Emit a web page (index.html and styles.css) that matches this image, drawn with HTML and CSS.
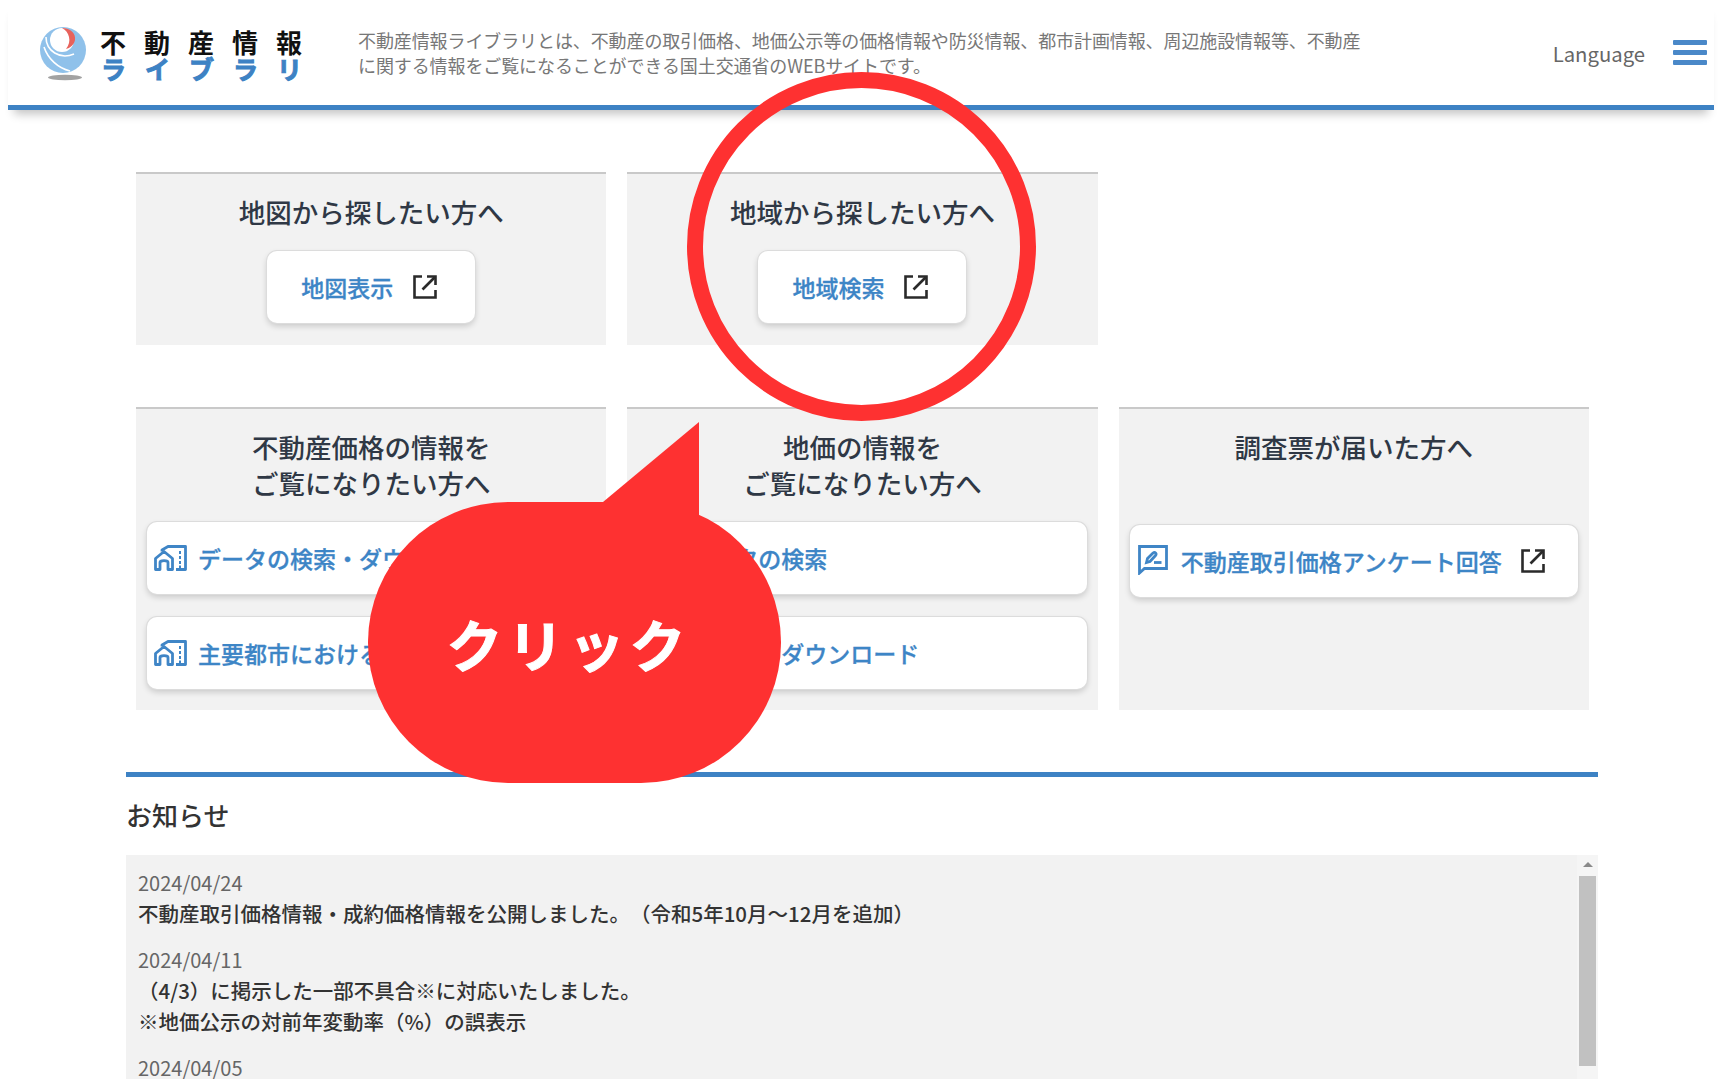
FILE: index.html
```html
<!DOCTYPE html>
<html lang="ja">
<head>
<meta charset="utf-8">
<title>不動産情報ライブラリ</title>
<link rel="stylesheet" href="styles.css">
</head>
<body>
<header class="site-header">
  <a class="logo">
    <svg class="logo-mark" viewBox="0 0 50 54" width="50" height="54" aria-hidden="true">
      <circle cx="23" cy="23" r="23" fill="#8fc1ea"/>
      <circle cx="22" cy="13" r="12" fill="#fff"/>
      <path d="M22 1C31 1 36 7 35 13C34 18 30 21 26 22C29 18 30 14 29 10C28 6 26 3 22 1Z" fill="#e8625c"/>
      <path d="M6 10C6 24 20 33 34 27" fill="none" stroke="#fff" stroke-width="1.6"/>
      <path d="M4 20C8 32 18 41 30 44" fill="none" stroke="#fff" stroke-width="1.6"/>
      <ellipse cx="25" cy="50.5" rx="17" ry="2.8" fill="#a2a2a2"/>
    </svg>
    <span class="logo-text">
      <span class="logo-main">不動産情報</span>
      <span class="logo-sub">ライブラリ</span>
    </span>
  </a>
  <p class="site-desc">不動産情報ライブラリとは、不動産の取引価格、地価公示等の価格情報や防災情報、都市計画情報、周辺施設情報等、不動産に関する情報をご覧になることができる国土交通省のWEBサイトです。</p>
  <span class="lang">Language</span>
  <button class="burger" aria-label="メニュー"><span></span><span></span><span></span></button>
</header>

<main class="content">
  <div class="card-grid">
    <section class="card">
      <h2 class="card-title">地図から探したい方へ</h2>
      <a class="btn btn-small"><span>地図表示</span>
        <svg class="ext" viewBox="0 0 24 24" aria-hidden="true"><path d="M9 1.5H1.5V22.5H22.5V15"/><path d="M9.5 14.5L22 2"/><path d="M14 1.5H22.5V10"/></svg>
      </a>
    </section>
    <section class="card">
      <h2 class="card-title">地域から探したい方へ</h2>
      <a class="btn btn-small"><span>地域検索</span>
        <svg class="ext" viewBox="0 0 24 24" aria-hidden="true"><path d="M9 1.5H1.5V22.5H22.5V15"/><path d="M9.5 14.5L22 2"/><path d="M14 1.5H22.5V10"/></svg>
      </a>
    </section>
    <div class="card-empty"></div>

    <section class="card">
      <h2 class="card-title">不動産価格の情報を<br>ご覧になりたい方へ</h2>
      <div class="btn-stack">
        <a class="btn btn-wide">
          <svg class="ico-house" viewBox="0 0 33 26" aria-hidden="true"><path d="M1.5 24.5V13.5L10 6.5L18.5 13.5V24.5H14V17.5C14 15 6 15 6 17.5V24.5Z"/><path d="M8 6.5V5L14 1.5H31.5V24.5H22"/><path d="M25 7.5H27M25 12.5H27M25 17.5H27M25 22H27"/></svg>
          <span>データの検索・ダウンロード</span>
        </a>
        <a class="btn btn-wide">
          <svg class="ico-house" viewBox="0 0 33 26" aria-hidden="true"><path d="M1.5 24.5V13.5L10 6.5L18.5 13.5V24.5H14V17.5C14 15 6 15 6 17.5V24.5Z"/><path d="M8 6.5V5L14 1.5H31.5V24.5H22"/><path d="M25 7.5H27M25 12.5H27M25 17.5H27M25 22H27"/></svg>
          <span>主要都市における不動産価格指数</span>
        </a>
      </div>
    </section>
    <section class="card">
      <h2 class="card-title">地価の情報を<br>ご覧になりたい方へ</h2>
      <div class="btn-stack">
        <a class="btn btn-wide">
          <svg class="ico-house" viewBox="0 0 33 26" aria-hidden="true"><path d="M1.5 24.5V13.5L10 6.5L18.5 13.5V24.5H14V17.5C14 15 6 15 6 17.5V24.5Z"/><path d="M8 6.5V5L14 1.5H31.5V24.5H22"/><path d="M25 7.5H27M25 12.5H27M25 17.5H27M25 22H27"/></svg>
          <span>データの検索</span>
        </a>
        <a class="btn btn-wide">
          <svg class="ico-house" viewBox="0 0 33 26" aria-hidden="true"><path d="M1.5 24.5V13.5L10 6.5L18.5 13.5V24.5H14V17.5C14 15 6 15 6 17.5V24.5Z"/><path d="M8 6.5V5L14 1.5H31.5V24.5H22"/><path d="M25 7.5H27M25 12.5H27M25 17.5H27M25 22H27"/></svg>
          <span>データのダウンロード</span>
        </a>
      </div>
    </section>
    <section class="card">
      <h2 class="card-title card-title-single">調査票が届いた方へ</h2>
      <a class="btn btn-wide btn-survey">
        <svg class="ico-form" viewBox="0 0 30 30" aria-hidden="true"><path d="M1.5 28V1.5H28.5V23.5H6.5Z"/><path d="M8.5 17.5L9.5 13.5L15 8C17 6.5 19 8.5 17.5 10.5L12 16.5Z"/><path d="M16 17.5H23.5"/></svg>
        <span>不動産取引価格アンケート回答</span>
        <svg class="ext ext-survey" viewBox="0 0 24 24" aria-hidden="true"><path d="M9 1.5H1.5V22.5H22.5V15"/><path d="M9.5 14.5L22 2"/><path d="M14 1.5H22.5V10"/></svg>
      </a>
    </section>
  </div>

  <section class="news">
    <h2 class="news-title">お知らせ</h2>
    <div class="news-box">
      <div class="news-list">
        <article class="news-item">
          <p class="news-date">2024/04/24</p>
          <p class="news-text">不動産取引価格情報・成約価格情報を公開しました。（令和5年10月～12月を追加）</p>
        </article>
        <article class="news-item">
          <p class="news-date">2024/04/11</p>
          <p class="news-text">（4/3）に掲示した一部不具合※に対応いたしました。<br>※地価公示の対前年変動率（%）の誤表示</p>
        </article>
        <article class="news-item">
          <p class="news-date">2024/04/05</p>
        </article>
      </div>
      <div class="scrollbar"><span class="scroll-up"></span><span class="scroll-thumb"></span></div>
    </div>
  </section>
</main>

<div class="ring"></div>
<div class="bubble"><span class="bubble-label">クリック</span></div>
</body>
</html>
```

FILE: styles.css
```css
* { box-sizing: border-box; }
html, body { margin: 0; padding: 0; height: 1080px; overflow: hidden; background: #fff; }
body {
  position: relative;
  font-family: "Noto Sans CJK JP", "Noto Sans", sans-serif;
  color: #333;
  text-spacing-trim: space-all;
}
p, h2 { margin: 0; }

/* header */
.site-header {
  display: flex;
  align-items: center;
  height: 110px;
  margin: 0 13px 0 8px;
  padding: 0 7px 0 32px;
  border-bottom: 5px solid #3d82c4;
  box-shadow: 0 10px 9px -6px rgba(0, 0, 0, .24);
}
.logo { display: flex; align-items: center; flex: none; }
.logo-mark { display: block; margin-top: 2px; }
.logo-text { display: flex; flex-direction: column; margin-left: 10px; padding-top: 2px; }
.logo-main {
  font-size: 26px;
  line-height: 28px;
  font-weight: 700;
  letter-spacing: 18px;
  color: #111;
}
.logo-sub {
  font-size: 25px;
  line-height: 24px;
  font-weight: 700;
  letter-spacing: 19px;
  color: #3d82c4;
  padding-left: 1px;
  -webkit-text-stroke: 1px #3d82c4;
}
.site-desc {
  width: 1006px;
  margin-left: 37px;
  font-size: 18px;
  line-height: 25px;
  letter-spacing: -.1px;
  color: #777;
  flex: none;
}
.lang { margin-left: auto; font-size: 20.3px; line-height: 30px; color: #666; }
.burger {
  display: flex;
  flex-direction: column;
  gap: 5px;
  width: 34px;
  margin: 0 0 0 28px;
  padding: 0;
  border: 0;
  background: none;
}
.burger span { display: block; height: 5px; border-radius: 1px; background: #4a88c8; }

/* cards */
.content { padding-top: 62px; }
.card-grid {
  display: grid;
  grid-template-columns: repeat(3, 1fr);
  column-gap: 21px;
  row-gap: 62px;
  margin: 0 138px 0 136px;
}
.card {
  display: flex;
  flex-direction: column;
  align-items: center;
  padding: 20px 11px 21px;
  background: #f2f2f2;
  border-top: 2px solid #c9c9c9;
}
.card-title {
  font-size: 26.5px;
  line-height: 36px;
  font-weight: 500;
  color: #2f3845;
  text-align: center;
}
.card-title-single { margin-bottom: 39px; }
.btn {
  display: flex;
  align-items: center;
  height: 72px;
  margin-top: 21px;
  background: #fff;
  border-radius: 10px;
  box-shadow: 0 0 0 1px #dcdcdc, 0 3px 6px rgba(0, 0, 0, .18);
  font-size: 23px;
  font-weight: 500;
  color: #3d85c6;
  -webkit-text-stroke: .3px #3d85c6;
}
.btn-small { justify-content: center; gap: 20px; width: 208px; margin-bottom: 1px; padding-right: 4px; }
.btn-stack { display: flex; flex-direction: column; gap: 23px; width: 100%; margin-top: 21px; }
.btn-stack .btn { margin-top: 0; }
.btn-wide { width: 100%; padding-left: 7px; }
.btn-survey { padding-left: 8px; }
.ext {
  flex: none;
  width: 24px;
  height: 24px;
  fill: none;
  stroke: #2a2a2a;
  stroke-width: 2.6;
}
.ext-survey { margin-left: 19px; }
.ico-house {
  flex: none;
  width: 33px;
  height: 26px;
  margin-right: 11px;
  fill: none;
  stroke: #3f85c6;
  stroke-width: 2.8;
  stroke-linejoin: round;
}
.ico-form {
  flex: none;
  width: 30px;
  height: 30px;
  margin-right: 13px;
  margin-top: -2px;
  fill: none;
  stroke: #3f85c6;
  stroke-width: 2.8;
}

/* news */
.news { margin: 62px 129px 0 126px; border-top: 5px solid #3d82c4; }
.news-title {
  margin: 20px 0 22px;
  font-size: 26px;
  line-height: 36px;
  font-weight: 500;
  color: #333;
}
.news-box { display: flex; height: 224px; overflow: hidden; background: #f2f2f2; }
.news-list { flex: 1; padding: 12px 12px 0; }
.news-item { margin-bottom: 15px; }
.news-date { font-size: 20px; line-height: 31px; color: #666; }
.news-text { font-size: 20.5px; line-height: 31px; font-weight: 500; color: #333; }
.scrollbar {
  display: flex;
  flex-direction: column;
  align-items: center;
  flex: none;
  width: 21px;
  background: #f5f5f5;
}
.scroll-up {
  flex: none;
  width: 0;
  height: 0;
  margin: 7px 0 9px;
  border: 5px solid transparent;
  border-top: 0;
  border-bottom-color: #8a8a8a;
}
.scroll-thumb { flex: none; width: 17px; height: 190px; background: #c1c1c1; }

/* annotations laid over the page */
.ring {
  position: absolute;
  left: 687px;
  top: 72px;
  width: 349px;
  height: 349px;
  border: 16px solid #fe3131;
  border-radius: 50%;
}
.bubble {
  position: absolute;
  left: 368px;
  top: 502px;
  display: flex;
  align-items: center;
  justify-content: center;
  width: 413px;
  height: 281px;
  border-radius: 140px;
  background: #fe3131;
}
.bubble::before {
  content: "";
  position: absolute;
  left: 222px;
  top: -80px;
  width: 109px;
  height: 100px;
  background: #fe3131;
  clip-path: polygon(13px 80px, 109px 0, 109px 100px, 13px 100px);
}
.bubble-label {
  position: relative;
  top: 0;
  left: -6px;
  font-size: 56px;
  line-height: 70px;
  font-weight: 700;
  letter-spacing: 5px;
  color: #fff;
  white-space: nowrap;
  -webkit-text-stroke: 1px #fff;
}
```
